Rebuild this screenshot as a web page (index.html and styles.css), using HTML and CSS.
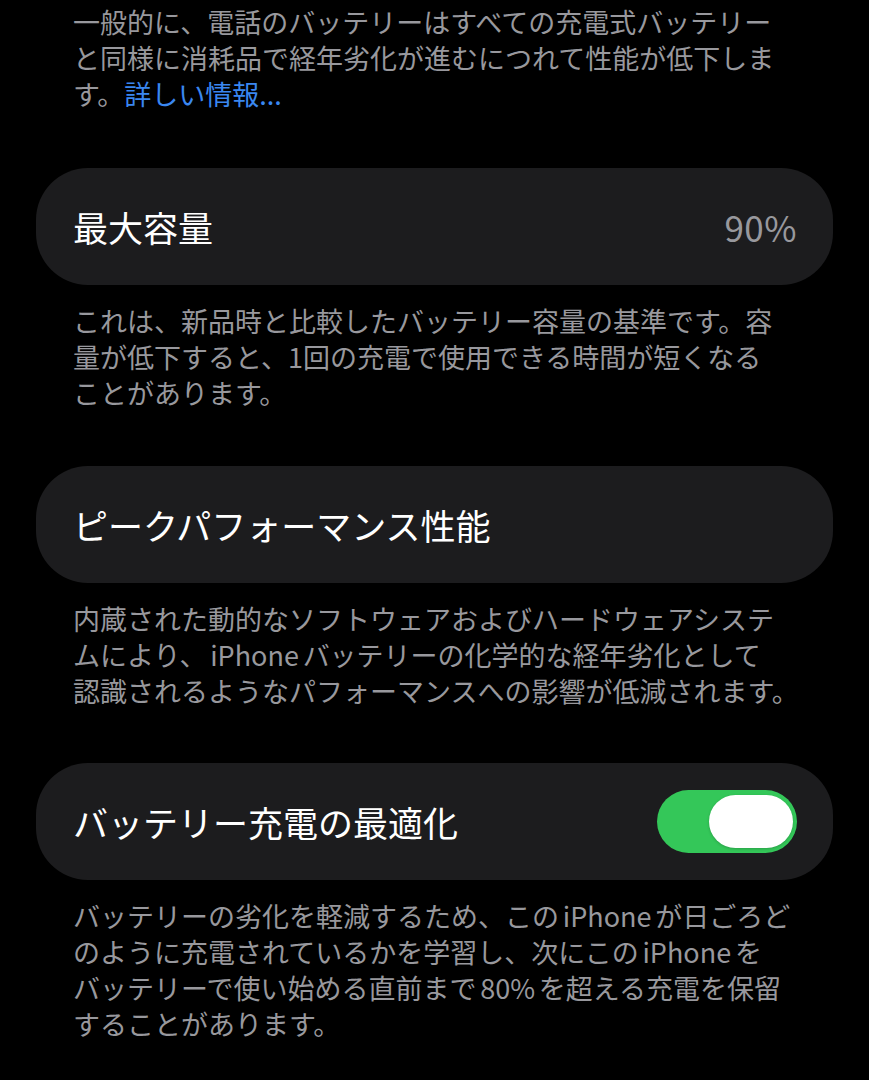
FILE: index.html
```html
<!DOCTYPE html>
<html lang="ja">
<head>
<meta charset="utf-8">
<title>バッテリーの状態</title>
<link rel="stylesheet" href="styles.css">
</head>
<body>
<main class="page">
  <p class="caption caption-top">一般的に、電話のバッテリーはすべての充電式バッテリー<br>と同様に消耗品で経年劣化が進むにつれて性能が低下しま<br>す。<a class="link" href="#">詳しい情報...</a></p>

  <section class="card">
    <span class="label">最大容量</span>
    <span class="value">90%</span>
  </section>
  <p class="caption">これは、新品時と比較したバッテリー容量の基準です。容<br>量が低下すると、1回の充電で使用できる時間が短くなる<br>ことがあります。</p>

  <section class="card">
    <span class="label">ピークパフォーマンス性能</span>
  </section>
  <p class="caption">内蔵された動的なソフトウェアおよびハードウェアシステ<br>ムにより、<span class="latin">iPhone</span>バッテリーの化学的な経年劣化として<br>認識されるようなパフォーマンスへの影響が低減されます。</p>

  <section class="card">
    <span class="label">バッテリー充電の最適化</span>
    <span class="toggle"><span class="knob"></span></span>
  </section>
  <p class="caption">バッテリーの劣化を軽減するため、この<span class="latin">iPhone</span>が日ごろど<br>のように充電されているかを学習し、次にこの<span class="latin">iPhone</span>を<br>バッテリーで使い始める直前まで<span class="latin">80%</span>を超える充電を保留<br>することがあります。</p>
</main>
</body>
</html>
```

FILE: styles.css
```css
html, body {
  margin: 0;
  padding: 0;
  background: #000;
}

body {
  font-family: "Noto Sans CJK JP", "Noto Sans", sans-serif;
  color: #fff;
}

.page {
  display: flex;
  flex-direction: column;
  padding: 4px 36px 0 36px;
}

.caption {
  margin: 0;
  padding: 0 37px;
  font-size: 27px;
  line-height: 36px;
  color: #98989d;
  white-space: nowrap;
}

.link {
  color: #3a87f0;
  text-decoration: none;
}

.latin {
  margin: 0 0.14em;
}

.card {
  display: flex;
  align-items: center;
  justify-content: space-between;
  height: 117px;
  padding: 0 36px 0 37px;
  background: #1c1c1e;
  border-radius: 52px;
  margin-bottom: 18px;
}

.caption + .card {
  margin-top: 54.5px;
}

.caption-top + .card {
  margin-top: 56px;
}

.label {
  font-size: 35px;
  line-height: 1;
  color: #fff;
}

.value {
  font-size: 35px;
  line-height: 1;
  letter-spacing: 0.5px;
  color: #98989d;
}

.toggle {
  display: flex;
  align-items: center;
  justify-content: flex-end;
  width: 140px;
  height: 63px;
  padding: 0 4px;
  box-sizing: border-box;
  border-radius: 32px;
  background: #34c759;
}

.knob {
  display: block;
  width: 84px;
  height: 53px;
  border-radius: 27px;
  background: #fff;
  box-shadow: 0 1px 3px rgba(0, 0, 0, 0.2);
}
```
